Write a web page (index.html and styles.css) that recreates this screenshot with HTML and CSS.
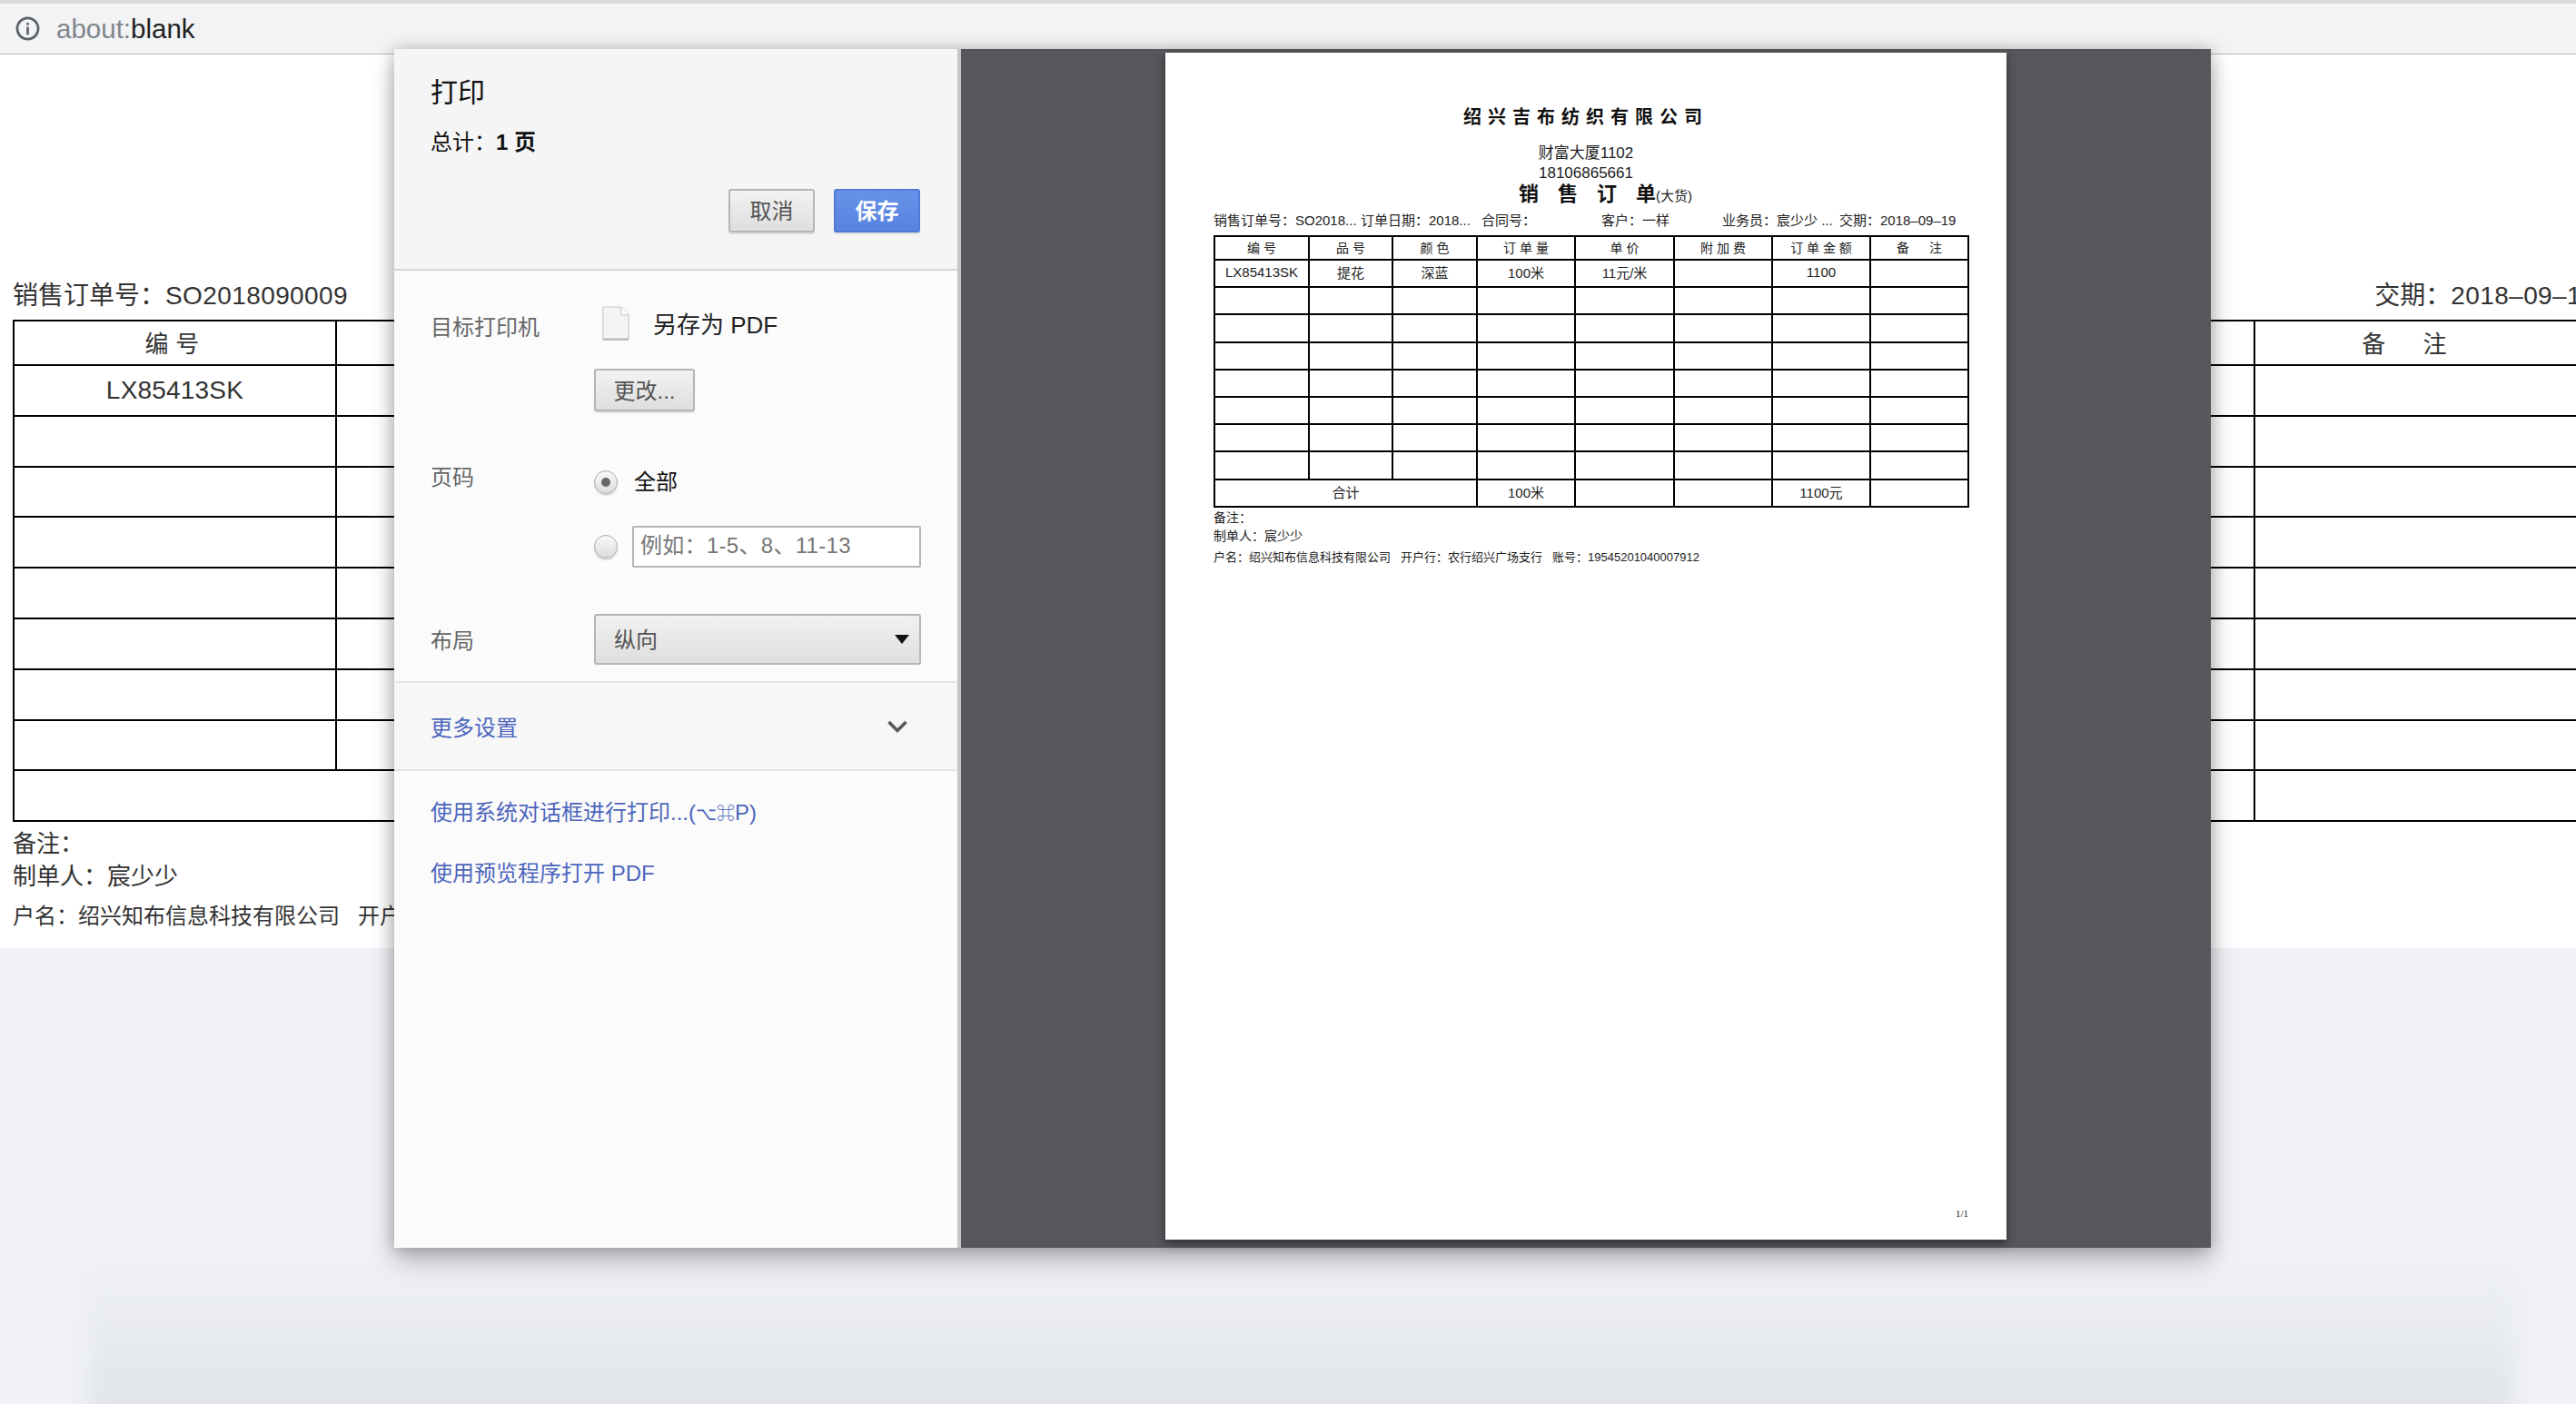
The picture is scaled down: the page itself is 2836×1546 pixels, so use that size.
FILE: index.html
```html
<!DOCTYPE html>
<html lang="zh-CN">
<head>
    <meta charset="UTF-8">
    <meta name="viewport" content="width=device-width, initial-scale=1.0">
    <title>about:blank</title>
    <link rel="stylesheet" href="styles.css">
</head>
<body>
    <div class="toolbar">
        <svg class="info-icon" viewBox="0 0 28 28"><circle cx="14" cy="14" r="12" fill="none" stroke="#5f6368" stroke-width="2.8"/><rect x="12.6" y="12" width="2.8" height="9" fill="#5f6368"/><rect x="12.6" y="7.3" width="2.8" height="2.8" fill="#5f6368"/></svg>
        <span class="url"><span class="url-dim">about:</span>blank</span>
    </div>

    <div class="doc">
        <div class="doc-info">
            <span>销售订单号：<span class="num">SO2018090009</span></span>
            <span>交期：<span class="num">2018–09–19</span></span>
        </div>
        <table class="doc-table">
            <colgroup>
                <col class="doc-col-1"><col class="doc-col-2"><col class="doc-col-2"><col class="doc-col-2">
                <col class="doc-col-2"><col class="doc-col-2"><col class="doc-col-7"><col class="doc-col-8">
            </colgroup>
            <tr class="doc-head"><th>编 号</th><th></th><th></th><th></th><th></th><th></th><th></th><th class="doc-last">备 　 注</th></tr>
            <tr><td>LX85413SK</td><td></td><td></td><td></td><td></td><td></td><td></td><td></td></tr>
            <tr><td></td><td></td><td></td><td></td><td></td><td></td><td></td><td></td></tr>
            <tr><td></td><td></td><td></td><td></td><td></td><td></td><td></td><td></td></tr>
            <tr><td></td><td></td><td></td><td></td><td></td><td></td><td></td><td></td></tr>
            <tr><td></td><td></td><td></td><td></td><td></td><td></td><td></td><td></td></tr>
            <tr><td></td><td></td><td></td><td></td><td></td><td></td><td></td><td></td></tr>
            <tr><td></td><td></td><td></td><td></td><td></td><td></td><td></td><td></td></tr>
            <tr><td></td><td></td><td></td><td></td><td></td><td></td><td></td><td></td></tr>
            <tr><td colspan="3"></td><td></td><td></td><td></td><td></td><td></td></tr>
        </table>
        <div class="doc-line">备注：</div>
        <div class="doc-line">制单人：宸少少</div>
        <div class="doc-bank">户名：绍兴知布信息科技有限公司 &nbsp; 开户行：农行绍兴广场支行</div>
    </div>

    <div class="window-shadow"></div>

    <div class="dialog">
        <div class="sidebar">
            <div class="side-head">
                <div class="side-title">打印</div>
                <div class="side-total">总计：<b>1 页</b></div>
                <div class="side-buttons">
                    <button class="btn btn-action">取消</button>
                    <button class="btn btn-action btn-save">保存</button>
                </div>
            </div>

            <div class="settings">
                <div class="row">
                    <div class="label label-dest">目标打印机</div>
                    <div>
                        <div class="dest">
                            <svg class="file-icon" viewBox="0 0 34 42"><path d="M2 2h21l9 9v28H2z" fill="#f4f4f4" stroke="#d2d2d2" stroke-width="1.5"/><path d="M23 2v9h9" fill="#fff" stroke="#d2d2d2" stroke-width="1.5"/><path d="M2 40h30" stroke="#b5b5b5" stroke-width="2"/></svg>
                            <span>另存为 PDF</span>
                        </div>
                        <button class="btn btn-change">更改...</button>
                    </div>
                </div>

                <div class="row row-pages">
                    <div class="label">页码</div>
                    <div>
                        <div class="option option-all">
                            <span class="radio radio-on"></span>
                            <span>全部</span>
                        </div>
                        <div class="option option-range">
                            <span class="radio"></span>
                            <div class="range-input">例如：1-5、8、11-13</div>
                        </div>
                    </div>
                </div>

                <div class="row row-layout">
                    <div class="label label-layout">布局</div>
                    <div class="select">
                        <span>纵向</span>
                        <svg class="select-arrow" viewBox="0 0 16 10"><path d="M0 0h16l-8 10z" fill="#111"/></svg>
                    </div>
                </div>
            </div>

            <div class="more">
                <span>更多设置</span>
                <svg class="chevron" viewBox="0 0 24 16"><path d="M2.500 3l9.500 9.500L21.500 3" fill="none" stroke="#5a5a5a" stroke-width="3.600"/></svg>
            </div>

            <div class="links">
                <div>使用系统对话框进行打印...(<span class="keys">⌥⌘</span>P)</div>
                <div>使用预览程序打开 PDF</div>
            </div>
        </div>

        <div class="preview">
            <div class="page">
                <div class="page-head">
                    <div class="company">绍兴吉布纺织有限公司</div>
                    <div class="address">财富大厦1102</div>
                    <div class="address">18106865661</div>
                    <div class="order-title"><b>销售订<span class="last-char">单</span></b><small>(大货)</small></div>
                </div>
                <div class="page-body">
                    <div class="order-info">
                        <span>销售订单号：SO2018...</span>
                        <span>订单日期：2018...</span>
                        <span>合同号：</span>
                        <span>客户：一样</span>
                        <span>业务员：宸少少 ...</span>
                        <span>交期：2018–09–19</span>
                    </div>
                    <table class="order-table">
                        <colgroup>
                            <col class="col-1"><col class="col-2"><col class="col-3"><col class="col-4">
                            <col class="col-5"><col class="col-6"><col class="col-7"><col class="col-8">
                        </colgroup>
                        <tr class="order-head"><th>编 号</th><th>品 号</th><th>颜 色</th><th>订 单 量</th><th>单 价</th><th>附 加 费</th><th>订 单 金 额</th><th>备 　 注</th></tr>
                        <tr><td>LX85413SK</td><td>提花</td><td>深蓝</td><td>100米</td><td>11元/米</td><td></td><td>1100</td><td></td></tr>
                        <tr><td></td><td></td><td></td><td></td><td></td><td></td><td></td><td></td></tr>
                        <tr><td></td><td></td><td></td><td></td><td></td><td></td><td></td><td></td></tr>
                        <tr><td></td><td></td><td></td><td></td><td></td><td></td><td></td><td></td></tr>
                        <tr><td></td><td></td><td></td><td></td><td></td><td></td><td></td><td></td></tr>
                        <tr><td></td><td></td><td></td><td></td><td></td><td></td><td></td><td></td></tr>
                        <tr><td></td><td></td><td></td><td></td><td></td><td></td><td></td><td></td></tr>
                        <tr><td></td><td></td><td></td><td></td><td></td><td></td><td></td><td></td></tr>
                        <tr><td colspan="3">合计</td><td>100米</td><td></td><td></td><td>1100元</td><td></td></tr>
                    </table>
                    <div class="page-line">备注：</div>
                    <div class="page-line">制单人：宸少少</div>
                    <div class="page-bank">
                        <span>户名：绍兴知布信息科技有限公司</span>
                        <span>开户行：农行绍兴广场支行</span>
                        <span>账号：19545201040007912</span>
                    </div>
                </div>
                <div class="page-number">1/1</div>
            </div>
        </div>
    </div>
</body>
</html>
```

FILE: styles.css
```css
html, body {
    margin: 0;
    height: 1546px;
    overflow: hidden;
}
body {
    position: relative;
    background: #eff1f6;
    color: #222;
    font-family: "Liberation Sans", "Noto Sans CJK SC", sans-serif;
}

/* address bar */
.toolbar {
    height: 55px;
    border-top: 4px solid #d9d9d9;
    border-bottom: 1px solid #b8b8b8;
    background: #f2f3f5;
    display: flex;
    align-items: center;
    padding-left: 17px;
    gap: 18px;
}
.info-icon {
    width: 27px;
    height: 27px;
}
.url {
    font-size: 29.5px;
    color: #222;
}
.url-dim {
    color: #80868b;
}

/* document behind the dialog */
.doc {
    background: #fff;
    height: 984px;
    padding-top: 248px;
    box-sizing: border-box;
    padding-left: 14px;
    width: 2836px;
    overflow: hidden;
}
.doc-info {
    width: 2844px;
    display: flex;
    justify-content: space-between;
    font-size: 28px;
    line-height: 36px;
    color: #333;
}
.num {
    letter-spacing: 0.4px;
}
.doc-table {
    width: 2841px;
    table-layout: fixed;
    border-collapse: collapse;
    margin-top: 8px;
    font-size: 28px;
    letter-spacing: 0.2px;
    color: #333;
}
.doc-table th, .doc-table td {
    border: 2px solid #000;
    padding: 0;
    height: 53.8px;
    text-align: center;
    font-weight: normal;
}
.doc-table th {
    font-size: 26px;
    height: 44px;
    padding: 0 6px 3px 0;
}
.doc-table .doc-last {
    padding-right: 44px;
}
.doc-col-1 { width: 355px; }
.doc-col-2 { width: 350px; }
.doc-col-7 { width: 362px; }
.doc-col-8 { width: 374px; }
.doc-line {
    font-size: 26px;
    line-height: 36px;
    color: #333;
    margin-top: 6px;
}
.doc-line + .doc-line {
    margin-top: 0;
}
.doc-bank {
    font-size: 24px;
    line-height: 32px;
    color: #333;
    margin-top: 10px;
}

.window-shadow {
    position: absolute;
    left: 100px;
    right: 70px;
    bottom: -20px;
    height: 170px;
    background: linear-gradient(to bottom, rgba(226, 229, 233, 0), #dfe2e6);
    filter: blur(10px);
}

/* print dialog */
.dialog {
    position: absolute;
    left: 434px;
    top: 54px;
    width: 2000px;
    height: 1320px;
    display: flex;
    background: #56575b;
    box-shadow: 0 14px 26px rgba(0, 0, 0, 0.25), 0 0 16px rgba(0, 0, 0, 0.22);
}
.sidebar {
    width: 620px;
    background: #fbfbfb;
    border-right: 4px solid #c6c6c6;
    font-size: 24px;
    flex-shrink: 0;
}
.side-head {
    height: 244px;
    box-sizing: border-box;
    background: #f5f5f5;
    border-bottom: 2px solid #d6d6d6;
    padding: 30px 41px 0 40px;
}
.side-title {
    font-size: 30px;
    line-height: 36px;
    color: #111;
}
.side-total {
    font-size: 24px;
    line-height: 32px;
    margin-top: 21px;
    color: #111;
}
.side-buttons {
    display: flex;
    justify-content: flex-end;
    gap: 21px;
    margin-top: 35px;
}
.btn {
    font: inherit;
    font-size: 24px;
    color: #555;
    border: 2px solid #b5b5b5;
    border-radius: 3px;
    background: linear-gradient(to bottom, #f2f2f2, #dedede);
    box-shadow: 0 2px 1px rgba(0, 0, 0, 0.1);
    padding: 0 0 3px;
}
.btn-action {
    width: 95px;
    height: 48px;
}
.btn-save {
    color: #fff;
    font-weight: bold;
    border-color: #4f7bd6;
    background: linear-gradient(to bottom, #6892e8, #5883df);
}
.btn-change {
    width: 111px;
    height: 47px;
    margin-top: 30px;
}

.settings {
    padding: 38px 40px 18px 40px;
}
.row {
    display: grid;
    grid-template-columns: 180px 360px;
}
.row-pages {
    margin-top: 57px;
}
.row-layout {
    margin-top: 51px;
}
.label {
    color: #666;
    line-height: 32px;
}
.label-dest {
    padding-top: 9px;
}
.label-layout {
    padding-top: 14px;
}
.dest {
    display: flex;
    align-items: center;
    gap: 25px;
    height: 40px;
    padding-left: 8px;
    color: #222;
    font-size: 26px;
}
.dest span {
    margin-top: -2px;
}
.file-icon {
    width: 32px;
    height: 40px;
}
.option {
    display: flex;
    align-items: center;
    line-height: 32px;
}
.option-all {
    gap: 18px;
    margin-top: 5px;
    color: #111;
}
.option-range {
    gap: 16px;
    margin-top: 32px;
}
.radio {
    width: 26px;
    height: 26px;
    box-sizing: border-box;
    border: 1px solid #aaa;
    border-radius: 50%;
    background: linear-gradient(to bottom, #fafafa, #dcdcdc);
    box-shadow: 0 2px 1px rgba(0, 0, 0, 0.12);
    display: flex;
    align-items: center;
    justify-content: center;
    flex-shrink: 0;
}
.radio-on::after {
    content: "";
    width: 10px;
    height: 10px;
    border-radius: 50%;
    background: #666;
}
.range-input {
    width: 318px;
    height: 46px;
    box-sizing: border-box;
    border: 2px solid #b5b5b5;
    border-radius: 2px;
    background: #fff;
    color: #777;
    padding-left: 7px;
    line-height: 40px;
    letter-spacing: 0.3px;
}
.select {
    height: 56px;
    box-sizing: border-box;
    border: 2px solid #b5b5b5;
    border-radius: 3px;
    background: linear-gradient(to bottom, #f1f1f1, #dfdfdf);
    display: flex;
    align-items: center;
    justify-content: space-between;
    padding: 0 11px 3px 20px;
    color: #555;
}
.select-arrow {
    width: 16px;
    height: 10px;
    margin-top: 3px;
}
.more {
    height: 99px;
    box-sizing: border-box;
    background: #f7f7f7;
    border-top: 2px solid #e6e6e6;
    border-bottom: 2px solid #e6e6e6;
    display: flex;
    align-items: center;
    justify-content: space-between;
    padding: 0 54px 0 40px;
    color: #4d66bd;
}
.chevron {
    width: 24px;
    height: 16px;
}
.links {
    padding: 30px 40px 0;
    color: #4d66bd;
    display: flex;
    flex-direction: column;
    gap: 34px;
    line-height: 32px;
}
.keys {
    font-size: 20px;
}

/* preview pane */
.preview {
    flex: 1;
    display: flex;
    justify-content: center;
    padding-top: 4px;
}
.page {
    width: 926px;
    height: 1307px;
    background: #fff;
    box-shadow: 0 4px 10px rgba(0, 0, 0, 0.45);
    display: flex;
    flex-direction: column;
    color: #222;
}
.page-head {
    padding-top: 59px;
    text-align: center;
}
.company {
    font-size: 20px;
    line-height: 24px;
    font-weight: bold;
    letter-spacing: 7px;
    color: #111;
}
.address {
    font-size: 17px;
    line-height: 22px;
}
.address:nth-child(2) {
    margin-top: 17px;
}
.order-title {
    line-height: 22px;
    padding-left: 43px;
    margin-top: 1px;
}
.order-title b {
    font-size: 22px;
    letter-spacing: 21px;
    color: #111;
}
.order-title .last-char {
    letter-spacing: 0;
}
.order-title small {
    font-size: 15px;
}
.page-body {
    margin: 6px 42px 0 53px;
}
.order-info {
    display: grid;
    grid-template-columns: 162px 133px 132px 133px 129px 1fr;
    font-size: 15px;
    line-height: 20px;
    white-space: nowrap;
}
.order-table {
    width: 830px;
    table-layout: fixed;
    border-collapse: collapse;
    margin-top: 6px;
    font-size: 15px;
}
.order-table th, .order-table td {
    border: 2px solid #000;
    padding: 0 0 3px;
    height: 25.2px;
    text-align: center;
    font-weight: normal;
}
.order-table th {
    font-size: 14px;
    height: 22px;
    padding-bottom: 2px;
}
.col-1 { width: 104px; }
.col-2 { width: 92px; }
.col-3 { width: 93px; }
.col-4 { width: 108px; }
.col-5 { width: 109px; }
.col-6 { width: 108px; }
.col-7 { width: 108px; }
.col-8 { width: 108px; }
.page-line {
    font-size: 14px;
    line-height: 20px;
}
.order-table + .page-line {
    margin-top: 1px;
}
.page-bank {
    display: flex;
    gap: 11px;
    font-size: 13px;
    line-height: 20px;
    margin-top: 4px;
}
.page-number {
    margin: auto 42px 22px 0;
    align-self: flex-end;
    font-family: "Liberation Serif", serif;
    font-size: 11px;
    line-height: 14px;
}
```
